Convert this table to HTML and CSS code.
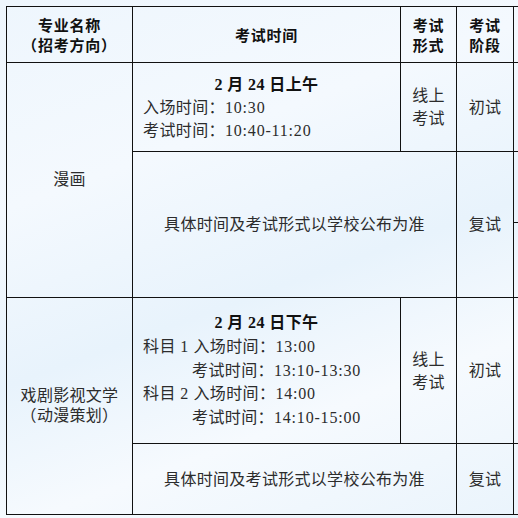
FILE: index.html
```html
<!DOCTYPE html>
<html lang="zh-CN">
<head>
<meta charset="utf-8">
<link rel="stylesheet" href="styles.css">
</head>
<body>
<div class="page">
  <table class="exam">
    <colgroup>
      <col class="c1"><col class="c2"><col class="c3"><col class="c4"><col class="c5">
    </colgroup>
    <tr class="r-head">
      <th>专业名称<br>（招考方向）</th>
      <th>考试时间</th>
      <th>考试<br>形式</th>
      <th>考试<br>阶段</th>
      <th class="extra"></th>
    </tr>
    <tr class="r1a">
      <td rowspan="2" class="major">漫画</td>
      <td class="time t1">
        <div class="title">2 月 24 日上午</div>
        <div>入场时间：<span class="num">10:30</span></div>
        <div>考试时间：<span class="num">10:40-11:20</span></div>
      </td>
      <td class="center">线上<br>考试</td>
      <td class="center">初试</td>
      <td class="extra"></td>
    </tr>
    <tr class="r1b">
      <td colspan="2" class="center">具体时间及考试形式以学校公布为准</td>
      <td class="center">复试</td>
      <td class="extra split"><div class="split-top"></div><div class="split-bottom"></div></td>
    </tr>
    <tr class="r2a">
      <td rowspan="2" class="major">戏剧影视文学<br>（动漫策划）</td>
      <td class="time t2">
        <div class="title">2 月 24 日下午</div>
        <div>科目 <span class="num">1</span> 入场时间：<span class="num">13:00</span></div>
        <div class="indent">考试时间：<span class="num">13:10-13:30</span></div>
        <div>科目 <span class="num">2</span> 入场时间：<span class="num">14:00</span></div>
        <div class="indent">考试时间：<span class="num">14:10-15:00</span></div>
      </td>
      <td class="center">线上<br>考试</td>
      <td class="center">初试</td>
      <td class="extra"></td>
    </tr>
    <tr class="r2b">
      <td colspan="2" class="center">具体时间及考试形式以学校公布为准</td>
      <td class="center">复试</td>
      <td class="extra"></td>
    </tr>
  </table>
</div>
</body>
</html>
```
FILE: styles.css
```css
html, body {
  margin: 0;
  padding: 0;
  overflow: hidden;
  width: 518px;
  height: 518px;
}
body {
  background: linear-gradient(160deg, #eef6fd 0%, #f4f9fe 30%, #e8f3fc 55%, #f6fafe 75%, #eaf4fc 100%);
  font-family: "Liberation Serif", "Noto Sans CJK SC", serif;
  color: #2c2c2c;
}
.page {
  padding: 6px 0 0 6px;
}
.exam {
  border-collapse: collapse;
  table-layout: fixed;
  width: 512px;
  font-size: 16px;
}
.c1 { width: 126px; }
.c2 { width: 268px; }
.c3 { width: 56px; }
.c4 { width: 57px; }
.c5 { width: 5px; }
.exam th, .exam td {
  border: 1px solid #111;
  padding: 0;
  vertical-align: middle;
}
.exam th {
  font-family: "Noto Sans CJK SC", sans-serif;
  font-weight: bold;
  font-size: 15px;
  line-height: 20px;
  letter-spacing: 0.8px;
  color: #111;
  text-align: center;
}
.r-head { height: 56px; }
.r1a { height: 89px; }
.r1b { height: 145px; }
.r2a { height: 146px; }
.r2b { height: 71px; }
.center, .major {
  text-align: center;
  line-height: 23px;
  letter-spacing: 0.3px;
}
.major { line-height: 20px; }
.exam .time {
  padding-left: 10px;
  text-align: left;
  letter-spacing: 0.4px;
}
.t1 { line-height: 23px; }
.t2 { line-height: 23.8px; }
.title {
  text-align: center;
  font-weight: bold;
  color: #111;
  padding-right: 10px;
}
.num { letter-spacing: 0.8px; }
.indent { padding-left: 49px; }
.exam .extra { border-right: none; }
.exam .split { vertical-align: top; }
.split-top {
  height: 70px;
  border-bottom: 1px solid #111;
}
.split-bottom { height: 74px; }
```
